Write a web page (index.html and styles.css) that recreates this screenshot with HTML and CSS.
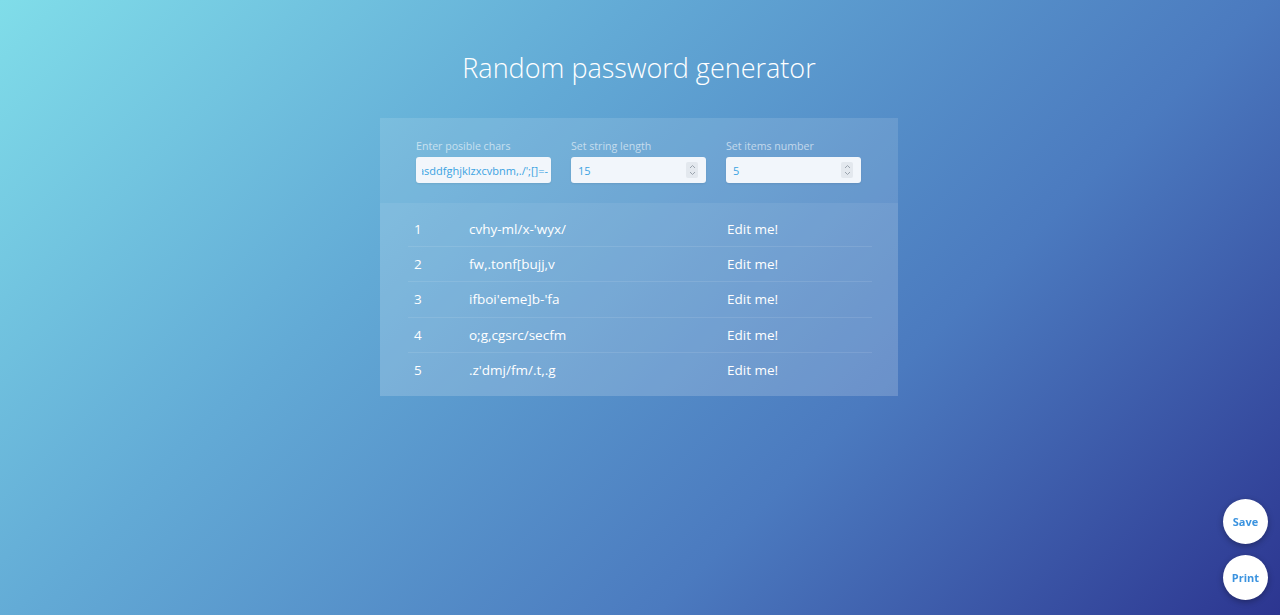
FILE: index.html
```html
<!DOCTYPE html>
<html lang="en">
<head>
    <meta charset="UTF-8">
    <meta name="viewport" content="width=device-width, initial-scale=1.0">
    <title>Random password generator</title>
    <link rel="stylesheet" href="styles.css">
</head>
<body>
    <div class="page">
        <h1 class="title">Random password generator</h1>

        <div class="card">
            <div class="settings">
                <label class="setting">
                    <span class="setting-name">Enter posible chars</span>
                    <span class="field">
                        <span class="field-clip field-end"><span class="field-text">qwertyuiopasddfghjklzxcvbnm,./';[]=-</span></span>
                    </span>
                </label>
                <label class="setting">
                    <span class="setting-name">Set string length</span>
                    <span class="field">
                        <span class="field-clip"><span class="field-text">15</span></span>
                        <span class="spin"><svg width="7" height="12" viewBox="0 0 7 12"><path d="M1 4 L3.5 1.5 L6 4 M1 8 L3.5 10.5 L6 8" fill="none" stroke="#9aa3ad" stroke-width="1"/></svg></span>
                    </span>
                </label>
                <label class="setting">
                    <span class="setting-name">Set items number</span>
                    <span class="field">
                        <span class="field-clip"><span class="field-text">5</span></span>
                        <span class="spin"><svg width="7" height="12" viewBox="0 0 7 12"><path d="M1 4 L3.5 1.5 L6 4 M1 8 L3.5 10.5 L6 8" fill="none" stroke="#9aa3ad" stroke-width="1"/></svg></span>
                    </span>
                </label>
            </div>

            <div class="results">
                <table class="list">
                    <tr><td class="num">1</td><td class="pass">cvhy-ml/x-'wyx/</td><td class="note">Edit me!</td></tr>
                    <tr><td class="num">2</td><td class="pass">fw,.tonf[bujj,v</td><td class="note">Edit me!</td></tr>
                    <tr><td class="num">3</td><td class="pass">ifboi'eme]b-'fa</td><td class="note">Edit me!</td></tr>
                    <tr><td class="num">4</td><td class="pass">o;g,cgsrc/secfm</td><td class="note">Edit me!</td></tr>
                    <tr><td class="num">5</td><td class="pass">.z'dmj/fm/.t,.g</td><td class="note">Edit me!</td></tr>
                </table>
            </div>
        </div>
    </div>

    <div class="actions">
        <button class="round-btn">Save</button>
        <button class="round-btn">Print</button>
    </div>
</body>
</html>
```

FILE: styles.css
```css
html, body {
    margin: 0;
    height: 100%;
}
body {
    font-family: "Open Sans", sans-serif;
    color: #fff;
    background: linear-gradient(135deg, #80dde9 0%, #63abd6 33%, #4b7abf 67%, #2c3590 100%);
    overflow: hidden;
}

.page {
    padding: 48px 2px 0 0;
    display: flex;
    flex-direction: column;
    align-items: center;
}
.title {
    margin: 0 0 30px;
    font-size: 27px;
    line-height: 40px;
    font-weight: 300;
}

.card {
    width: 518px;
}
.settings {
    display: flex;
    gap: 20px;
    padding: 21px 36px 20px;
    background: rgba(255, 255, 255, 0.12);
}
.setting {
    display: flex;
    flex-direction: column;
    gap: 3px;
    width: 135px;
}
.setting-name {
    font-size: 10.6px;
    line-height: 15px;
    color: rgba(255, 255, 255, 0.6);
}
.field {
    display: flex;
    align-items: center;
    height: 26px;
    box-sizing: border-box;
    padding: 0 8px 0 7px;
    background: #f2f6fb;
    border-radius: 3px;
    box-shadow: 0 1px 2px rgba(0, 0, 0, 0.08);
    font-size: 11px;
    color: #3ba3e2;
}
.field-clip {
    flex: 1;
    display: flex;
    overflow: hidden;
    white-space: nowrap;
}
.field-end {
    justify-content: flex-end;
}
.field-text {
    flex: none;
}
.setting:first-child .field {
    padding: 0 3px 0 6px;
}
.spin {
    display: flex;
    align-items: center;
    justify-content: center;
    width: 12px;
    height: 16px;
    background: #e3e8ee;
    border-radius: 2px;
}

.results {
    padding: 8px 26px 9px 28px;
    background: rgba(255, 255, 255, 0.18);
}
.list {
    width: 100%;
    border-collapse: collapse;
    font-size: 13.5px;
}
.list td {
    height: 34.3px;
    padding: 0 6px;
    border-top: 1px solid rgba(255, 255, 255, 0.1);
}
.list tr:first-child td {
    border-top: none;
    height: 35px;
}
.list .num { width: 43px; }
.list .pass { width: 246px; }

.actions {
    position: fixed;
    right: 12px;
    bottom: 15px;
    display: flex;
    flex-direction: column;
    gap: 11px;
}
.round-btn {
    width: 45px;
    height: 45px;
    border: none;
    border-radius: 50%;
    background: #fff;
    box-shadow: 0 2px 6px rgba(0, 0, 0, 0.3);
    font-family: "Open Sans", sans-serif;
    font-size: 11px;
    font-weight: 700;
    color: #3b93df;
    padding: 0;
}
```
